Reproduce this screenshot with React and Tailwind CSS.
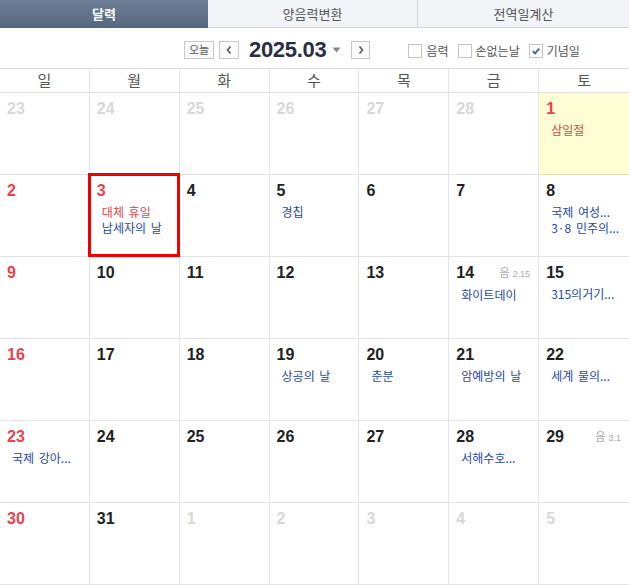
import React from "react";

const F = { fontFamily: '"Liberation Sans", "Noto Sans CJK KR", sans-serif' };

const weeks = [
  [
    { d: 23, o: true }, { d: 24, o: true }, { d: 25, o: true }, { d: 26, o: true },
    { d: 27, o: true }, { d: 28, o: true },
    { d: 1, red: true, today: true, ev: [{ t: "삼일절", red: true }] },
  ],
  [
    { d: 2, red: true }, { d: 3, red: true, box: true, ev: [{ t: "대체 휴일", red: true }, { t: "납세자의 날" }] },
    { d: 4 }, { d: 5, ev: [{ t: "경칩" }] }, { d: 6 }, { d: 7 },
    { d: 8, ev: [{ t: "국제 여성..." }, { t: "3·8 민주의..." }] },
  ],
  [
    { d: 9, red: true }, { d: 10 }, { d: 11 }, { d: 12 }, { d: 13 },
    { d: 14, lunar: "2.15", ev: [{ t: "화이트데이" }] },
    { d: 15, ev: [{ t: "315의거기..." }] },
  ],
  [
    { d: 16, red: true }, { d: 17 }, { d: 18 }, { d: 19, ev: [{ t: "상공의 날" }] },
    { d: 20, ev: [{ t: "춘분" }] }, { d: 21, ev: [{ t: "암예방의 날" }] },
    { d: 22, ev: [{ t: "세계 물의..." }] },
  ],
  [
    { d: 23, red: true, ev: [{ t: "국제 강아..." }] }, { d: 24 }, { d: 25 }, { d: 26 }, { d: 27 },
    { d: 28, ev: [{ t: "서해수호..." }] }, { d: 29, lunar: "3.1" },
  ],
  [
    { d: 30, red: true }, { d: 31 }, { d: 1, o: true }, { d: 2, o: true }, { d: 3, o: true },
    { d: 4, o: true }, { d: 5, o: true },
  ],
];

function Checkbox({ checked }) {
  return (
    <span className="w-[14px] h-[14px] border border-[#c4c4c4] bg-white flex items-center justify-center">
      {checked && (
        <svg width="10" height="10" viewBox="0 0 10 10">
          <path d="M1.8 5.2 L4 7.4 L8.3 2.6" fill="none" stroke="#3f5f8a" strokeWidth="1.8" />
        </svg>
      )}
    </span>
  );
}

function Cell({ c, last }) {
  const numColor = c.o ? "text-[#d8d8d8]" : c.red ? "text-[#e8424f]" : "text-[#222]";
  return (
    <div
      className={`relative h-[82px] border-b border-[#e4e4e4] ${last ? "" : "border-r"} ${
        c.today ? "bg-[#fffdd3] border-[#e6e0b4]" : "bg-white"
      }`}
    >
      <div className="flex items-start justify-between pl-[7px] pr-[8px] pt-[6px]">
        <span className={`text-[16px] leading-[20px] font-bold ${numColor}`}>{c.d}</span>
        {c.lunar && (
          <span className="text-[#aaa] text-[11px] leading-[20px]">
            음 <span className="text-[9px]">{c.lunar}</span>
          </span>
        )}
      </div>
      {c.ev && (
        <div className="pl-[12px] pt-[3px] flex flex-col">
          {c.ev.map((e, i) => (
            <span
              key={i}
              className={`text-[12px] leading-[16px] whitespace-nowrap [word-spacing:2px] ${
                e.red ? "text-[#e0424b]" : "text-[#274a9c]"
              }`}
              style={{ fontFamily: '"Noto Sans CJK KR", sans-serif' }}
            >
              {e.t}
            </span>
          ))}
        </div>
      )}
      {c.box && (
        <div className="absolute left-[-2px] top-[-2px] right-[-1px] bottom-[-1px] border-[3px] border-[#f00000]" />
      )}
    </div>
  );
}

export default function App() {
  const days = ["일", "월", "화", "수", "목", "금", "토"];
  return (
    <div className="w-[629px] h-[585px] bg-white overflow-hidden" style={F}>
      {/* Tabs */}
      <div className="flex h-[28px]" style={{ fontFamily: '"Noto Sans CJK KR", sans-serif' }}>
        <div className="w-[208px] flex items-center justify-center text-white text-[13px] font-bold bg-gradient-to-b from-[#6f7f98] to-[#56667e]">
          달력
        </div>
        <div className="w-[210px] flex items-center justify-center text-[#555] text-[13px] bg-[#f3f4f7] border-b border-r border-[#d3d6dc]">
          양음력변환
        </div>
        <div className="flex-1 flex items-center justify-center text-[#555] text-[13px] bg-[#f3f4f7] border-b border-[#d3d6dc]">
          전역일계산
        </div>
      </div>
      {/* Toolbar */}
      <div className="h-[41px] flex items-center pl-[184px] pt-[3px] border-b border-[#dcdcdc]">
        <div className="h-[18px] w-[30px] border border-[#c8c8c8] bg-[#fafafa] flex items-center justify-center text-[11px] text-[#555]" style={{ fontFamily: '"Noto Sans CJK KR", sans-serif' }}>
          오늘
        </div>
        <div className="ml-[5px] h-[18px] w-[20px] border border-[#c8c8c8] bg-[#fafafa] flex items-center justify-center">
          <svg width="8" height="10" viewBox="0 0 8 10">
            <path d="M5.5 1.5 L2.5 5 L5.5 8.5" fill="none" stroke="#555" strokeWidth="1.6" />
          </svg>
        </div>
        <span className="ml-[10px] text-[22px] leading-[24px] font-bold text-[#2b2e42] tracking-[-0.3px]">2025.03</span>
        <svg className="ml-[6px]" width="9" height="6" viewBox="0 0 9 6">
          <path d="M0.5 0.5 L8.5 0.5 L4.5 5.5 Z" fill="#888" />
        </svg>
        <div className="ml-[10px] h-[18px] w-[19px] border border-[#c8c8c8] bg-[#fafafa] flex items-center justify-center">
          <svg width="8" height="10" viewBox="0 0 8 10">
            <path d="M2.5 1.5 L5.5 5 L2.5 8.5" fill="none" stroke="#555" strokeWidth="1.6" />
          </svg>
        </div>
        <div className="ml-[38px] mt-[3px] flex items-center gap-[4px] text-[12px] text-[#555]" style={{ fontFamily: '"Noto Sans CJK KR", sans-serif' }}>
          <Checkbox />
          <span>음력</span>
          <span className="ml-[5px]"><Checkbox /></span>
          <span>손없는날</span>
          <span className="ml-[5px]"><Checkbox checked /></span>
          <span>기념일</span>
        </div>
      </div>
      {/* Weekday header */}
      <div className="grid grid-cols-7 h-[24px] border-b border-[#e0e0e0]" style={{ fontFamily: '"Noto Sans CJK KR", sans-serif' }}>
        {days.map((d, i) => (
          <div key={d} className={`flex items-center justify-center text-[15px] text-[#555] ${i < 6 ? "border-r border-[#e4e4e4]" : ""}`}>
            {d}
          </div>
        ))}
      </div>
      {/* Grid */}
      <div className="grid grid-cols-7">
        {weeks.flat().map((c, i) => (
          <Cell key={i} c={c} last={i % 7 === 6} />
        ))}
      </div>
    </div>
  );
}
